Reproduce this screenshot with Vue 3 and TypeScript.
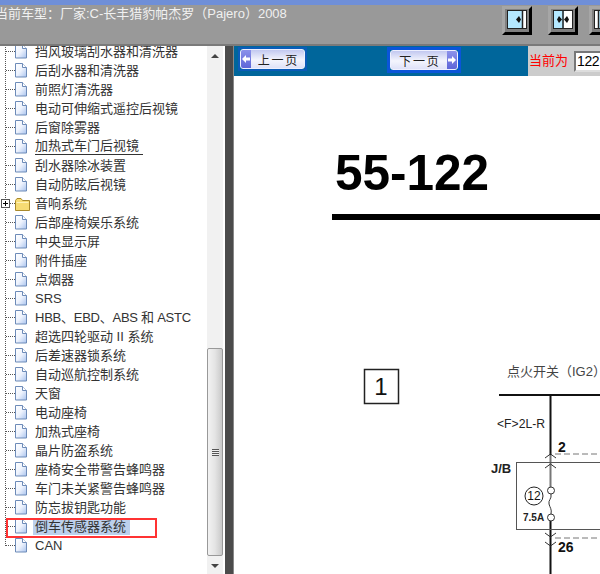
<script setup lang="ts">
interface TreeRow {
  label: string
  folder?: boolean
  underline?: boolean
  selected?: boolean
  tight?: boolean
}

const rows: TreeRow[] = [
  { label: '挡风玻璃刮水器和清洗器' },
  { label: '后刮水器和清洗器' },
  { label: '前照灯清洗器' },
  { label: '电动可伸缩式遥控后视镜' },
  { label: '后窗除雾器' },
  { label: '加热式车门后视镜', underline: true },
  { label: '刮水器除冰装置' },
  { label: '自动防眩后视镜' },
  { label: '音响系统', folder: true },
  { label: '后部座椅娱乐系统' },
  { label: '中央显示屏' },
  { label: '附件插座' },
  { label: '点烟器' },
  { label: 'SRS' },
  { label: 'HBB、EBD、ABS 和 ASTC', tight: true },
  { label: '超选四轮驱动 II 系统' },
  { label: '后差速器锁系统' },
  { label: '自动巡航控制系统' },
  { label: '天窗' },
  { label: '电动座椅' },
  { label: '加热式座椅' },
  { label: '晶片防盗系统' },
  { label: '座椅安全带警告蜂鸣器' },
  { label: '车门未关紧警告蜂鸣器' },
  { label: '防忘拔钥匙功能' },
  { label: '倒车传感器系统', selected: true },
  { label: 'CAN' }
]
</script>

<template>
  <div class="page">
    <header class="topbar">
      <div class="title">当前车型&#xFF1A;厂家:C-长丰猎豹帕杰罗&#xFF08;Pajero&#xFF09;2008</div>
      <div class="tools">
        <button class="tool">
          <span class="pane">
            <svg width="18" height="17" viewBox="0 0 18 17">
              <path d="M15 0h3v17h-3z" fill="#fff" />
              <path d="M14.500 0v17" stroke="#222" stroke-width="1.500" />
              <path d="M8 8.500l3-3.500 2 3.500-2 3.500z" fill="#111" />
            </svg>
          </span>
        </button>
        <button class="tool">
          <span class="pane">
            <svg width="18" height="17" viewBox="0 0 18 17">
              <path d="M10 0h8v17h-8z" fill="#fff" />
              <path d="M9 0v17" stroke="#222" stroke-width="1.500" />
              <path d="M3 8.500l2-3.500 3 3.500-3 3.500zM15 8.500l-2-3.500-3 3.500 3 3.500z" fill="#111" />
            </svg>
          </span>
        </button>
        <button class="tool last">
          <span class="pane">
            <svg width="18" height="17" viewBox="0 0 18 17">
              <path d="M0 0h3v17h-3z" fill="#fff" />
              <path d="M3.500 0v17" stroke="#222" stroke-width="1.500" />
            </svg>
          </span>
        </button>
      </div>
    </header>

    <div class="main">
      <aside class="side">
        <div class="tree">
          <div class="tree-inner">
            <div class="tree-line"></div>
            <div v-for="row in rows" :key="row.label" class="row">
              <span v-if="row.folder" class="plus"></span>
              <span class="dash"></span>
              <svg v-if="row.folder" class="icon folder" width="15" height="14" viewBox="0 0 15 14">
                <path d="M.5 3.500 2 1.500h4l1.500 2h7v10h-14z" fill="#f7dc74" stroke="#a8892c" />
                <path d="M1.500 5.500h12" stroke="#fff3b8" />
              </svg>
              <svg v-else class="icon doc" width="14" height="15" viewBox="0 0 14 15">
                <defs>
                  <linearGradient id="docfill" x1="0" y1="0" x2="1" y2="1">
                    <stop offset="0" stop-color="#ffffff" />
                    <stop offset="0.5" stop-color="#eef3fd" />
                    <stop offset="1" stop-color="#a9c3ee" />
                  </linearGradient>
                </defs>
                <path d="M.5.500h7l4 4v9.500h-11z" fill="url(#docfill)" stroke="#6d8bb8" />
                <path d="M7.500.500v4h4" fill="#fff" stroke="#6d8bb8" />
              </svg>
              <span
                class="label"
                :class="{ under: row.underline, sel: row.selected, tight: row.tight }"
              >{{ row.label }}</span>
            </div>
            <div class="red-box"></div>
          </div>
        </div>
        <div class="scrollbar">
          <span class="arrow up"></span>
          <div class="thumb"><span class="grip"></span></div>
          <span class="arrow down"></span>
        </div>
      </aside>

      <div class="splitter"></div>

      <section class="viewer">
        <nav class="nav">
          <div class="nav-left">
            <a class="page-btn prev">
              <span class="face">
                <i class="cap">
                  <svg width="10" height="10" viewBox="0 0 10 10"><path d="M1 5l4-4v2.500h4v3h-4v2.500z" fill="#fff" /></svg>
                </i>
                <span class="txt">上 一 页</span>
              </span>
            </a>
            <a class="page-btn next">
              <span class="face">
                <span class="txt">下 一 页</span>
                <i class="cap">
                  <svg width="10" height="10" viewBox="0 0 10 10"><path d="M9 5l-4-4v2.500h-4v3h4v2.500z" fill="#fff" /></svg>
                </i>
              </span>
            </a>
          </div>
          <div class="nav-right">
            <span class="cur">当前为</span>
            <span class="cur-input">122</span>
          </div>
        </nav>

        <div class="sheet">
          <svg class="drawing" width="366" height="498" viewBox="234 76 366 498">
            <text x="335" y="190" class="pageno">55-122</text>
            <rect x="332" y="214" width="268" height="6" fill="#000" />

            <rect x="364.5" y="369.5" width="34" height="34" fill="none" stroke="#222" stroke-width="1.5" />
            <text x="381" y="395" class="boxno">1</text>

            <text x="507" y="376" class="cjk">点火开关&#xFF08;IG2&#xFF09;</text>
            <path d="M499 395h101" stroke="#111" stroke-width="2" />
            <path d="M550.500 395v60M550.500 521v53" stroke="#111" stroke-width="2" />
            <path d="M550.500 455v32" stroke="#777" stroke-width="2" />

            <text x="497" y="428" class="wire" textLength="48" lengthAdjust="spacingAndGlyphs">&lt;F&gt;2L-R</text>
            <text x="558" y="452" class="pin">2</text>
            <path d="M555 454h45M555 538h45" stroke="#777" stroke-dasharray="6 3" fill="none" />
            <rect x="516.5" y="462.5" width="90" height="67" fill="none" stroke="#555" />
            <text x="491" y="473" class="jb">J/B</text>

            <path d="M545 458l5.500-4 5.500 4M545 468l5.500-4 5.500 4M545 533l5.500 4 5.500-4M545 542l5.500 4 5.500-4" fill="none" stroke="#333" />

            <circle cx="534" cy="496" r="9" fill="none" stroke="#222" />
            <text x="534" y="500" class="fuse-no">12</text>
            <circle cx="551" cy="490.500" r="3.500" fill="#fff" stroke="#333" />
            <circle cx="551" cy="517.500" r="3.500" fill="#fff" stroke="#333" />
            <path d="M551 494c1 5-3 6-2 10s3 5 2 10" fill="none" stroke="#333" />
            <text x="523" y="521" class="amp">7.5A</text>
            <text x="558" y="552" class="pin">26</text>
          </svg>
        </div>
      </section>
    </div>
  </div>
</template>

<style>
html,
body {
  margin: 0;
  padding: 0;
  background: #fff;
}
</style>

<style scoped>
.page {
  width: 600px;
  height: 574px;
  overflow: hidden;
  display: flex;
  flex-direction: column;
  font-family: "Liberation Sans", "Noto Sans CJK SC", sans-serif;
}

.topbar {
  height: 46px;
  flex: none;
  box-sizing: border-box;
  background: #999;
  border-top: 5px solid #6f8fd8;
  border-bottom: 2px solid #7a7a7a;
  display: flex;
  justify-content: space-between;
  overflow: hidden;
}

.title {
  margin: 0 0 0 -5px;
  font-size: 13px;
  line-height: 18px;
  color: #f0f0f0;
  white-space: nowrap;
}

.tools {
  width: 98px;
  flex: none;
  display: flex;
  gap: 16px;
  padding-top: 1px;
}

.tool {
  width: 30px;
  height: 29px;
  flex: none;
  padding: 0 0 2px;
  box-sizing: border-box;
  background: #808080;
  border-style: solid;
  border-width: 3px;
  border-color: #a6a6a6 #000 #000 #a6a6a6;
  display: flex;
  align-items: center;
  justify-content: center;
}

.tool.last {
  margin-left: -5px;
}

.pane {
  width: 18px;
  height: 17px;
  flex: none;
  background: #b4e8ff;
  outline: 1px solid #222;
  display: block;
}

.pane svg {
  display: block;
}

.main {
  flex: 1;
  display: flex;
  min-height: 0;
}

.side {
  width: 225px;
  flex: none;
  display: flex;
  background: #fff;
}

.tree {
  width: 207px;
  overflow: hidden;
  color: #333;
  font-size: 13px;
}

.tree-inner {
  position: relative;
  margin-top: -4px;
}

.tree-line {
  position: absolute;
  left: 5px;
  top: 0;
  height: 504px;
  border-left: 1px dotted #555;
}

.row {
  position: relative;
  height: 19px;
  display: flex;
  align-items: center;
  padding-left: 6px;
}

.plus {
  position: absolute;
  left: 1px;
  top: 5px;
  width: 7px;
  height: 7px;
  border: 1px solid #555;
  background:
    linear-gradient(#000, #000) center / 5px 1px no-repeat,
    linear-gradient(#000, #000) center / 1px 5px no-repeat,
    #fff;
}

.dash {
  width: 9px;
  flex: none;
  border-top: 1px dotted #555;
}

.icon {
  flex: none;
  display: block;
}

.icon.doc {
  margin-right: 6px;
}

.icon.folder {
  margin-right: 5px;
}

.label {
  white-space: nowrap;
  line-height: 19px;
}

.label.tight {
  letter-spacing: -0.25px;
}

.label.under {
  line-height: 16px;
  border-bottom: 1px solid #333;
  padding-right: 4px;
}

.label.sel {
  background: #bcd0ec;
  line-height: 17px;
  padding: 0 4px 0 2px;
  margin-left: -2px;
}

.red-box {
  position: absolute;
  left: 6px;
  top: 476px;
  width: 147px;
  height: 16px;
  border: 2px solid #f33;
}

.scrollbar {
  position: relative;
  width: 16px;
  background: #f1f1f1;
  display: flex;
  flex-direction: column;
}

.arrow {
  position: absolute;
  left: 4px;
  width: 0;
  height: 0;
  border-left: 4px solid transparent;
  border-right: 4px solid transparent;
}

.arrow.up {
  top: 8px;
  border-bottom: 4px solid #444;
}

.arrow.down {
  bottom: 6px;
  border-top: 4px solid #444;
}

.thumb {
  margin-top: 302px;
  height: 208px;
  box-sizing: border-box;
  border: 1px solid #999;
  border-radius: 2px;
  background: linear-gradient(90deg, #f2f2f2, #e4e4e4 50%, #c9c9c9);
  display: flex;
  align-items: center;
  justify-content: center;
}

.grip {
  width: 7px;
  height: 7px;
  background: repeating-linear-gradient(#555 0 1px, #eee 1px 2px);
}

.splitter {
  width: 9px;
  flex: none;
  box-sizing: border-box;
  background: #4b4b4b;
  border-right: 1px solid #888;
}

.viewer {
  flex: 1;
  min-width: 0;
  display: flex;
  flex-direction: column;
}

.nav {
  height: 30px;
  flex: none;
  display: flex;
}

.nav-left {
  width: 294px;
  flex: none;
  background: #00669b;
  display: flex;
  align-items: flex-start;
  padding: 1px 0 0 4px;
  box-sizing: border-box;
}

.nav-right {
  flex: 1;
  min-width: 0;
  overflow: hidden;
  background: #ccc;
  display: flex;
  gap: 6px;
  padding: 5px 0 0 1px;
  white-space: nowrap;
}

.page-btn {
  box-sizing: border-box;
  display: block;
  font-size: 12px;
  color: #222;
}

.page-btn.prev {
  width: 69px;
  height: 24px;
  border: 2px solid #0a5cb8;
}

.page-btn.next {
  width: 74px;
  height: 26px;
  margin-left: 80px;
  border: 3px solid #0b55d9;
}

.face {
  height: 100%;
  box-sizing: border-box;
  display: flex;
  align-items: center;
  overflow: hidden;
  border: 1px solid #eef0ff;
  border-radius: 3px;
  background: linear-gradient(#c2c8f0, #f4f5fd 55%, #dfe2f8);
}

.txt {
  flex: 1;
  text-align: center;
  word-spacing: -1.5px;
}

.cap {
  width: 10px;
  height: 100%;
  flex: none;
  background: linear-gradient(#8b91ea, #5e66d8);
  display: flex;
  align-items: center;
  justify-content: center;
}

.cur {
  color: #f00;
  font-size: 13px;
  line-height: 20px;
}

.cur-input {
  width: 40px;
  height: 21px;
  flex: none;
  box-sizing: border-box;
  background: #fff;
  border: 2px solid;
  border-color: #777 #ddd #ddd #777;
  font-size: 14px;
  letter-spacing: -0.4px;
  line-height: 17px;
  color: #000;
  padding-left: 1px;
}

.sheet {
  flex: 1;
  min-height: 0;
  background: #fff;
  overflow: hidden;
}

.drawing {
  display: block;
}

.pageno {
  font: bold 49.5px "Liberation Sans", sans-serif;
  fill: #000;
}

.boxno {
  font: 24px "Liberation Sans", sans-serif;
  text-anchor: middle;
  fill: #111;
}

.cjk {
  font: 13px "Liberation Sans", "Noto Sans CJK SC", sans-serif;
  fill: #444;
}

.wire {
  font: 13px "Liberation Sans", sans-serif;
  fill: #222;
}

.jb {
  font: bold 13px "Liberation Sans", sans-serif;
  fill: #222;
}

.pin {
  font: bold 14px "Liberation Sans", sans-serif;
  fill: #111;
}

.fuse-no {
  font: 12px "Liberation Sans", sans-serif;
  text-anchor: middle;
  fill: #111;
}

.amp {
  font: bold 10px "Liberation Sans", sans-serif;
  fill: #222;
}
</style>
